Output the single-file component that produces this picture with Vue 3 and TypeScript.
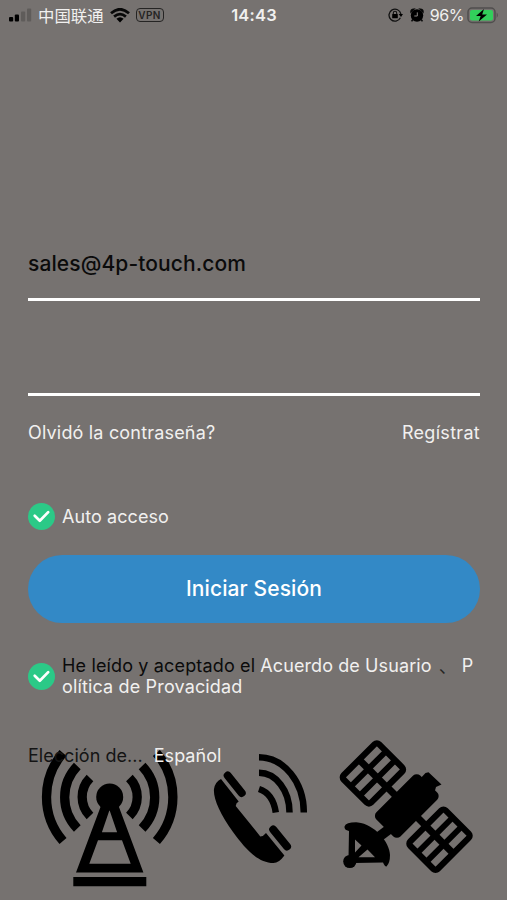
<script setup lang="ts">
import { ref } from 'vue'

const email = ref('sales@4p-touch.com')
const autoLogin = ref(true)
const accepted = ref(true)
const panels = [{ x: 372.9, y: 773.4 }, { x: 439.5, y: 839.7 }]
</script>

<template>
  <main class="screen">
    <header class="status">
      <div class="carrier">
        <svg class="signal" width="23" height="14" viewBox="0 0 23 14">
          <rect x="0" y="9" width="4.2" height="4.5" rx="1" />
          <rect x="5.8" y="6.6" width="4.2" height="6.9" rx="1" />
          <rect class="dim" x="12" y="3.6" width="4.2" height="9.9" rx="1" />
          <rect class="dim" x="18" y="0.5" width="4.2" height="13" rx="1" />
        </svg>
        <span class="operator">中国联通</span>
        <svg class="wifi" width="20" height="15" viewBox="0 0 20 15">
          <path d="M1 5.2Q10-2.7 19 5.2M4.1 8.6Q10 3.6 15.9 8.6" fill="none" stroke="#080808" stroke-width="2.7" />
          <path d="M10 14.5L6.4 10.8Q10 7.8 13.6 10.8Z" />
        </svg>
        <span class="vpn">VPN</span>
      </div>
      <time class="clock">14:43</time>
      <div class="power">
        <svg width="15" height="14" viewBox="0 0 15 14">
          <path d="M12.4 9.8A6 6 0 1 1 12.9 6" fill="none" stroke="#111" stroke-width="1.3" />
          <path d="M10.7 6H15L13 9Z" />
          <rect x="4.2" y="6" width="5.6" height="4.2" rx=".5" />
          <path d="M5.3 6V5a1.7 1.7 0 0 1 3.4 0V6" fill="none" stroke="#111" stroke-width="1.1" />
        </svg>
        <svg class="alarm" width="14" height="15" viewBox="0 0 14 15">
          <circle cx="7" cy="7.5" r="6.2" />
          <path d="M1 4Q.6 1.4 3.8 1.2ZM13 4Q13.4 1.4 10.2 1.2ZM2.8 11.3L1.6 13.4M11.2 11.3L12.4 13.4" stroke="#080808" stroke-width="1.5" />
          <path d="M7.3 4.4V8H4.3" fill="none" stroke="#8a8684" stroke-width="1" />
        </svg>
        <span class="percent">96%</span>
        <svg class="battery" width="32" height="17" viewBox="0 0 32 17">
          <rect x="1" y="1" width="27" height="14.5" rx="4" fill="none" stroke="#504e4d" stroke-width="1.5" />
          <rect x="3" y="3" width="23" height="10.5" rx="2" fill="#32cf5b" />
          <path d="M29.7 5.5Q32 8.2 29.7 11Z" fill="#504e4d" />
          <path d="M17 2L9 9H13.7L11.7 14.6L20 7.4H15.2Z" />
        </svg>
      </div>
    </header>

    <form class="login" @submit.prevent>
      <div class="field account"><span>{{ email }}</span></div>
      <div class="field password"></div>
      <div class="links">
        <a class="forgot">Olvidó la contraseña?</a>
        <a class="register">Regístrat</a>
      </div>
      <div class="option" @click="autoLogin = !autoLogin">
        <svg class="check" viewBox="0 0 27 27">
          <circle cx="13.5" cy="13.5" r="13.5" />
          <path v-if="autoLogin" d="M6.7 12.8L11.8 17.8L20.2 9.1" />
        </svg>
        <span class="auto">Auto acceso</span>
      </div>
      <button class="submit" type="submit"><span>Iniciar Sesión</span></button>
      <div class="option terms" @click="accepted = !accepted">
        <svg class="check" viewBox="0 0 27 27">
          <circle cx="13.5" cy="13.5" r="13.5" />
          <path v-if="accepted" d="M6.7 12.8L11.8 17.8L20.2 9.1" />
        </svg>
        <div class="agreement">
          <div class="row"><span class="dark">He leído y aceptado el</span><a class="user">Acuerdo de Usuario</a><span class="comma">、</span><a>P</a></div>
          <div class="row"><a class="policy">olítica de Provacidad</a></div>
        </div>
      </div>
    </form>

    <footer class="bottom">
      <svg class="art" viewBox="0 730 507 170">
        <g class="tower">
          <g class="waves">
            <path d="M90 778A27 27 0 0 0 90 816M77.3 766A45 45 0 0 0 77.3 828.5M63 753A67 67 0 0 0 63 841" />
            <path d="M129.4 778A27 27 0 0 1 129.4 816M142.1 766A45 45 0 0 1 142.1 828.5M156.4 753A67 67 0 0 1 156.4 841" />
          </g>
          <circle cx="109.7" cy="797" r="13.5" />
          <path fill-rule="evenodd" d="M102 803H117.5L143.4 872.4H76ZM109.5 810L101.9 832.3H117.1ZM98 840.3L89.3 863.7H130.7L122 840.3Z" />
          <path d="M73.3 877H146.3V886.2H73.3Z" />
        </g>
        <g class="phone">
          <path class="ring" d="M259 757.3A45 55 0 0 1 303.8 812.5M259 772.8A30.5 39.5 0 0 1 289.5 812.5M259 789Q273 793.5 275.8 812.5" />
          <path d="M221 779L238.7 801.5Q236 802.5 235.7 806L260.3 836.4Q263.5 836.4 266 833L284.4 855.5Q279 863 273.5 863C257 863 244 847 233 832C220 814 213 798 214 789Q215 782 221 779Z" />
          <path class="piece" d="M227.7 775.5L241.7 793M273.2 829.5L287 846.5" />
        </g>
        <g class="satellite">
          <g v-for="p in panels" :key="p.x" :transform="`translate(${p.x} ${p.y}) rotate(-45)`">
            <rect class="panel" x="-25" y="-19.4" width="50" height="38.8" rx="3" />
            <path class="grid" d="M-25-6.4H25M-25 6.4H25" />
            <path class="spine" d="M0-19.4V19.4" />
          </g>
          <path d="M387 787L424 824" stroke="#000" stroke-width="7" />
          <rect x="-31" y="-17" width="62" height="34" rx="5" transform="translate(406.8 806) rotate(-45)" />
          <path d="M418 781L425.5 773L428.5 772.3L441.5 784.5L436 787L434 794Z" />
          <path d="M392 827L376 839" stroke="#000" stroke-width="10" />
          <path fill-rule="evenodd" d="M344.5 826.5Q346 822 358 822.4C374 824 390 842 390 855Q390 863 386.5 866.5Q385 867 383 862.5L354 863L348.5 858L349 831Q344 830 344.5 826.5ZM355 839.5V852.5L361.5 845.5ZM358.5 857.2H375L367.5 849.5Z" />
          <circle cx="349.8" cy="861.5" r="6.6" />
        </g>
      </svg>
      <div class="language"><span class="label">Elección de...</span><a class="value">Español</a></div>
    </footer>
  </main>
</template>

<style>
body { margin: 0; background: #767270; }
</style>

<style scoped>
* { box-sizing: border-box; }
.screen { width: 507px; height: 900px; display: flex; flex-direction: column; overflow: hidden; background: #767270; color: #f1f0ef; font-family: Inter, "Noto Sans CJK SC", sans-serif; font-size: 18px; }
span, a { white-space: nowrap; }
svg { display: block; flex: none; }
.status { height: 30px; display: grid; grid-template-columns: 1fr auto 1fr; align-items: center; padding: 0 8px 0 9px; }
.carrier, .power { display: flex; align-items: center; }
.power { justify-content: flex-end; }
.dim { fill: #5f5c5a; }
.operator { margin-left: 6px; font: 16.4px/22px "Noto Sans CJK SC", sans-serif; }
.wifi { margin-left: 6px; }
.vpn { width: 28px; height: 14px; margin-left: 6px; border: 1.5px solid #252423; border-radius: 4px; color: #252423; font-size: 10px; font-weight: 600; line-height: 12px; text-align: center; letter-spacing: .4px; }
.clock { font-size: 16.5px; font-weight: 600; letter-spacing: .2px; }
.alarm { margin-left: 7px; }
.percent { margin-left: 6px; font-size: 16px; letter-spacing: -.4px; }
.battery { margin-left: 3px; }
.login { display: flex; flex-direction: column; padding: 0 27px 0 28px; }
.field { border-bottom: 3px solid #fff; }
.account { height: 271px; padding-top: 220px; color: #0b0b0b; font-size: 21px; font-weight: 500; line-height: 28px; letter-spacing: .11px; }
.password { height: 95px; }
.links { display: flex; justify-content: space-between; margin-top: 25px; line-height: 24px; letter-spacing: .18px; }
.register { letter-spacing: .3px; }
.option { display: flex; align-items: center; gap: 7px; height: 28px; margin-top: 57px; }
.auto { letter-spacing: .08px; }
.check { width: 27px; height: 27px; }
.check circle { fill: #2bc987; }
.check path { fill: none; stroke: #fff; stroke-width: 2.7; stroke-linecap: round; stroke-linejoin: round; }
.submit { width: 452px; height: 68px; margin: 25px 0 0; padding: 0; border: 0; border-radius: 34px; background: #3389c6; color: #fff; font: 500 21px/26px Inter, sans-serif; letter-spacing: .1px; }
.terms { height: 44px; margin-top: 31px; }
.agreement { line-height: 21.5px; }
.row { display: flex; letter-spacing: .15px; }
.user { margin-left: 5px; letter-spacing: .1px; }
.dark { color: #0b0b0b; }
.comma { width: 18px; margin: 0 5px 0 7px; color: #252423; font-family: "Noto Sans CJK SC", sans-serif; line-height: 20px; }
.bottom { position: relative; height: 170px; margin-top: 32px; }
.art { position: absolute; inset: 0; width: 507px; height: 170px; }
.waves path { fill: none; stroke: #000; stroke-width: 9.3; }
.ring { fill: none; stroke: #000; stroke-width: 6.5; }
.piece { fill: none; stroke: #000; stroke-width: 8; stroke-linecap: round; }
.panel { fill: none; stroke: #000; stroke-width: 6.2; }
.grid { fill: none; stroke: #000; stroke-width: 5.8; }
.spine { stroke: #000; stroke-width: 7; }
.language { position: relative; display: flex; gap: 11px; padding: 14px 0 0 28px; line-height: 24px; letter-spacing: .04px; }
.label { color: #141414; }
</style>
